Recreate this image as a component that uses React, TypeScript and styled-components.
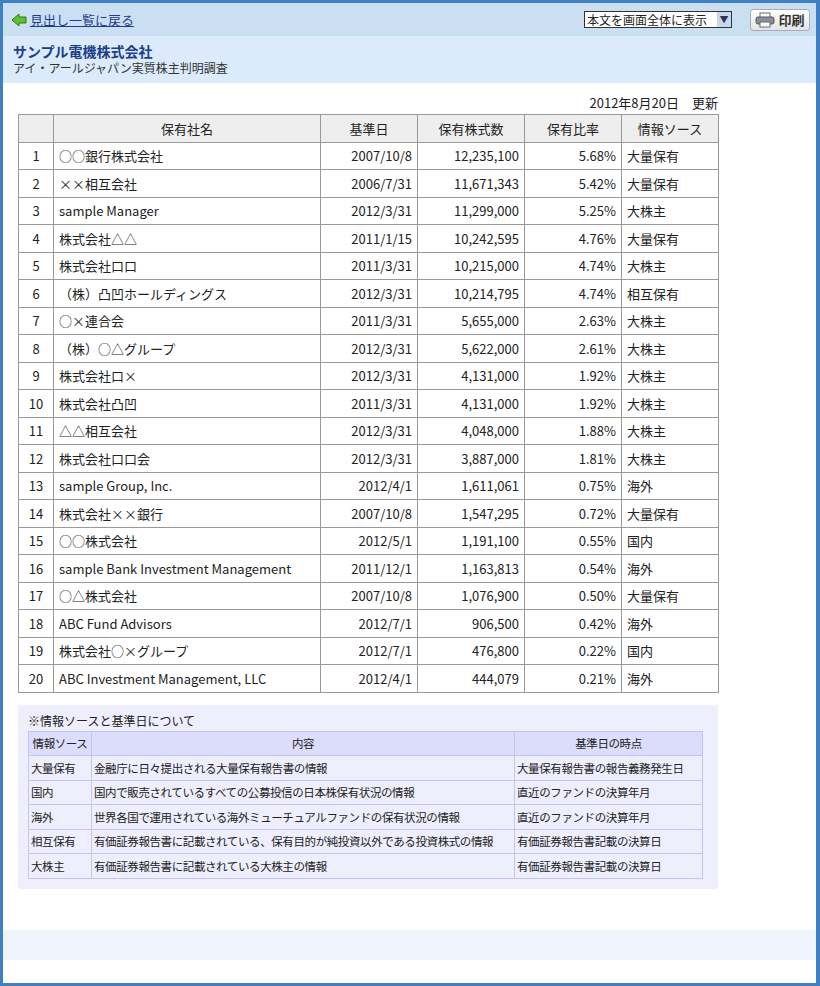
import React from "react";
import styled, { createGlobalStyle } from "styled-components";

const G = createGlobalStyle`
  html,body{margin:0;padding:0;background:#fff;}
  body{font-family:"Noto Sans CJK JP","Noto Sans",sans-serif;font-size:13px;color:#222;}
`;
const Frame = styled.div`
  width:820px;height:986px;box-sizing:border-box;border:3px solid #3f7fc4;border-right-width:4px;
  display:flex;flex-direction:column;
`;
const TopBar = styled.div`
  height:33px;background:#cbdff3;display:flex;align-items:center;padding:0 6px 0 8px;gap:8px;
`;
const Back = styled.a`
  color:#1f3d8f;text-decoration:underline;font-size:13px;display:flex;align-items:center;gap:3px;flex:1;
`;
const Select = styled.div`
  width:148px;height:17px;border:1px solid #333;background:#fff;display:flex;align-items:center;font-size:12px;
  box-sizing:border-box;padding-left:2px;justify-content:space-between;
`;
const Arrow = styled.span`
  width:14px;height:15px;background:#c8d8f0;color:#335;font-size:9px;display:flex;align-items:center;justify-content:center;
`;
const PrintBtn = styled.div`
  margin-left:10px;width:58px;height:20px;border:1px solid #aab;border-radius:3px;background:linear-gradient(#fff,#e4e4e4);
  display:flex;align-items:center;justify-content:center;gap:3px;font-weight:bold;color:#333;font-size:13px;
`;
const TitleArea = styled.div`
  height:47px;background:#dcebfb;padding:6px 10px 0;box-sizing:border-box;
`;
const Title = styled.div`font-weight:bold;color:#1d3f8a;font-size:14px;line-height:18px;`;
const Sub = styled.div`font-size:12px;color:#333;line-height:16px;`;
const Main = styled.div`padding:12px 0 0 15px;flex:1;display:flex;flex-direction:column;`;
const DateLine = styled.div`width:700px;text-align:right;font-size:13px;line-height:16px;margin-bottom:3px;`;
const Table = styled.table`
  border-collapse:collapse;width:700px;table-layout:fixed;
  td,th{border:1px solid #999;height:26.5px;padding:0 5px;font-size:13px;white-space:nowrap;}
  th{background:#eee;font-weight:normal;}
`;
const Td = styled.td<{ $a?: string }>`text-align:${p => p.$a || "left"};`;
const Note = styled.div`
  margin-top:12px;width:700px;background:#eeeefd;padding:8px 16px 10px 10px;box-sizing:border-box;
`;
const NoteTitle = styled.div`font-size:12px;line-height:16px;margin-bottom:2px;`;
const NTable = styled.table`
  border-collapse:collapse;width:674px;table-layout:fixed;
  td,th{border:1px solid #c4c4ee;height:23.5px;padding:0 2px;font-size:11.5px;letter-spacing:-0.4px;white-space:nowrap;overflow:hidden;}
  th{background:#dcdcfb;font-weight:normal;}
`;
const Footer = styled.div`height:30px;background:#edf4fc;margin-bottom:23px;`;

const rows: [string, string, string, string, string][] = [
  ["○○銀行株式会社","2007/10/8","12,235,100","5.68%","大量保有"],
  ["××相互会社","2006/7/31","11,671,343","5.42%","大量保有"],
  ["sample Manager","2012/3/31","11,299,000","5.25%","大株主"],
  ["株式会社△△","2011/1/15","10,242,595","4.76%","大量保有"],
  ["株式会社口口","2011/3/31","10,215,000","4.74%","大株主"],
  ["（株）凸凹ホールディングス","2012/3/31","10,214,795","4.74%","相互保有"],
  ["○×連合会","2011/3/31","5,655,000","2.63%","大株主"],
  ["（株）○△グループ","2012/3/31","5,622,000","2.61%","大株主"],
  ["株式会社口×","2012/3/31","4,131,000","1.92%","大株主"],
  ["株式会社凸凹","2011/3/31","4,131,000","1.92%","大株主"],
  ["△△相互会社","2012/3/31","4,048,000","1.88%","大株主"],
  ["株式会社口口会","2012/3/31","3,887,000","1.81%","大株主"],
  ["sample Group, Inc.","2012/4/1","1,611,061","0.75%","海外"],
  ["株式会社××銀行","2007/10/8","1,547,295","0.72%","大量保有"],
  ["○○株式会社","2012/5/1","1,191,100","0.55%","国内"],
  ["sample Bank Investment Management","2011/12/1","1,163,813","0.54%","海外"],
  ["○△株式会社","2007/10/8","1,076,900","0.50%","大量保有"],
  ["ABC Fund Advisors","2012/7/1","906,500","0.42%","海外"],
  ["株式会社○×グループ","2012/7/1","476,800","0.22%","国内"],
  ["ABC Investment Management, LLC","2012/4/1","444,079","0.21%","海外"],
];
const notes = [
  ["大量保有","金融庁に日々提出される大量保有報告書の情報","大量保有報告書の報告義務発生日"],
  ["国内","国内で販売されているすべての公募投信の日本株保有状況の情報","直近のファンドの決算年月"],
  ["海外","世界各国で運用されている海外ミューチュアルファンドの保有状況の情報","直近のファンドの決算年月"],
  ["相互保有","有価証券報告書に記載されている、保有目的が純投資以外である投資株式の情報","有価証券報告書記載の決算日"],
  ["大株主","有価証券報告書に記載されている大株主の情報","有価証券報告書記載の決算日"],
];

export default function App() {
  return (
    <Frame>
      <G />
      <TopBar>
        <Back>
          <svg width="16" height="14" viewBox="0 0 16 14"><path d="M1 7 L8 1 V4 H15 V10 H8 V13 Z" fill="#5cc030" stroke="#2a7a10" strokeWidth="1"/></svg>
          見出し一覧に戻る
        </Back>
        <Select>本文を画面全体に表示<Arrow>▼</Arrow></Select>
        <PrintBtn>
          <svg width="20" height="16" viewBox="0 0 20 16"><rect x="5" y="1" width="10" height="5" fill="#fff" stroke="#667"/><rect x="1" y="5" width="18" height="7" rx="2" fill="#8a9099" stroke="#556"/><rect x="5" y="10" width="10" height="5" fill="#fff" stroke="#667"/></svg>
          印刷
        </PrintBtn>
      </TopBar>
      <TitleArea>
        <Title>サンプル電機株式会社</Title>
        <Sub>アイ・アールジャパン実質株主判明調査</Sub>
      </TitleArea>
      <Main>
        <DateLine>2012年8月20日　更新</DateLine>
        <Table>
          <colgroup><col width="35"/><col width="267"/><col width="97"/><col width="107"/><col width="97"/><col width="97"/></colgroup>
          <thead><tr><th></th><th>保有社名</th><th>基準日</th><th>保有株式数</th><th>保有比率</th><th>情報ソース</th></tr></thead>
          <tbody>
            {rows.map((r, i) => (
              <tr key={i}>
                <Td $a="center">{i + 1}</Td><Td>{r[0]}</Td><Td $a="right">{r[1]}</Td>
                <Td $a="right">{r[2]}</Td><Td $a="right">{r[3]}</Td><Td>{r[4]}</Td>
              </tr>
            ))}
          </tbody>
        </Table>
        <Note>
          <NoteTitle>※情報ソースと基準日について</NoteTitle>
          <NTable>
            <colgroup><col width="63"/><col width="423"/><col width="188"/></colgroup>
            <thead><tr><th>情報ソース</th><th>内容</th><th>基準日の時点</th></tr></thead>
            <tbody>{notes.map((n, i) => <tr key={i}><td>{n[0]}</td><td>{n[1]}</td><td>{n[2]}</td></tr>)}</tbody>
          </NTable>
        </Note>
        <div style={{ flex: 1 }} />
      </Main>
      <Footer />
    </Frame>
  );
}
